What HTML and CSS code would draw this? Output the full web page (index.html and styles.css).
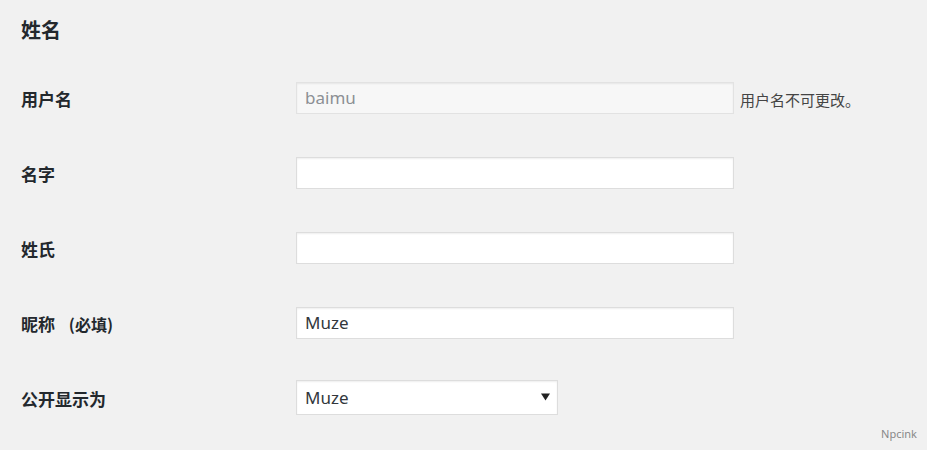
FILE: index.html
```html
<!DOCTYPE html>
<html lang="zh-CN">
<head>
<meta charset="utf-8">
<title>姓名</title>
<link rel="stylesheet" href="styles.css">
</head>
<body>
<main class="page">
  <h2 class="section-title">姓名</h2>
  <div class="form-table">
    <div class="row">
      <label class="label" for="user_login">用户名</label>
      <div class="field">
        <input class="text-input" id="user_login" type="text" value="baimu" disabled>
        <span class="description">用户名不可更改。</span>
      </div>
    </div>
    <div class="row">
      <label class="label" for="first_name">名字</label>
      <div class="field"><input class="text-input" id="first_name" type="text" value=""></div>
    </div>
    <div class="row">
      <label class="label" for="last_name">姓氏</label>
      <div class="field"><input class="text-input" id="last_name" type="text" value=""></div>
    </div>
    <div class="row">
      <label class="label" for="nickname">昵称 <span class="required">(必填)</span></label>
      <div class="field"><input class="text-input" id="nickname" type="text" value="Muze"></div>
    </div>
    <div class="row">
      <label class="label" for="display_name">公开显示为</label>
      <div class="field">
        <div class="select-wrap">
          <select class="select" id="display_name">
            <option>Muze</option>
            <option>baimu</option>
          </select>
          <svg class="select-arrow" width="9" height="8" viewBox="0 0 9 8" aria-hidden="true"><path d="M0 0.5 L9 0.5 L4.5 7.5 Z" fill="#222"/></svg>
        </div>
      </div>
    </div>
  </div>
  <div class="watermark">Npcink</div>
</main>
</body>
</html>
```

FILE: styles.css
```css
html, body {
  margin: 0;
  padding: 0;
  background: #f1f1f1;
}
body {
  font-family: "Noto Sans", "Noto Sans CJK SC", sans-serif;
  color: #23282d;
}
.page {
  position: relative;
  height: 450px;
  padding: 0 21px;
  box-sizing: border-box;
}
.section-title {
  margin: 0;
  padding-top: 16px;
  font-size: 20px;
  line-height: 28px;
  font-weight: 700;
  font-family: "Noto Sans CJK SC", sans-serif;
  color: #23282d;
}
.form-table {
  margin-top: 16px;
}
.row {
  display: grid;
  grid-template-columns: 275px 1fr;
  align-items: center;
  height: 75px;
}
.label {
  font-family: "Noto Sans CJK SC", sans-serif;
  font-weight: 700;
  font-size: 17px;
  line-height: 24px;
  color: #23282d;
  padding-top: 3px;
}
.required {
  font-size: 16px;
  font-weight: 600;
  margin-left: 10px;
}
.field {
  display: flex;
  align-items: center;
  gap: 6px;
}
.text-input {
  width: 438px;
  height: 32px;
  box-sizing: border-box;
  border: 1px solid #ddd;
  background: #fff;
  box-shadow: inset 0 1px 2px rgba(0,0,0,.07);
  padding: 0 8px;
  margin: 0;
  font-family: "Noto Sans", "Noto Sans CJK SC", sans-serif;
  font-size: 17px;
  color: #32373c;
  outline: none;
}
.text-input:disabled {
  background: #f7f7f7;
  color: #8c8f94;
  border-color: #e2e2e2;
}
.description {
  font-family: "Noto Sans CJK SC", sans-serif;
  font-size: 15px;
  color: #444;
  padding-top: 4px;
}
.select-wrap {
  position: relative;
  width: 262px;
  height: 35px;
}
.select {
  appearance: none;
  -webkit-appearance: none;
  width: 262px;
  height: 35px;
  box-sizing: border-box;
  border: 1px solid #ddd;
  background: #fff;
  box-shadow: inset 0 1px 2px rgba(0,0,0,.07);
  padding: 0 8px;
  margin: 0;
  font-family: "Noto Sans", "Noto Sans CJK SC", sans-serif;
  font-size: 17px;
  color: #32373c;
  border-radius: 0;
  outline: none;
}
.select-arrow {
  position: absolute;
  right: 8px;
  top: 13px;
  pointer-events: none;
}
.watermark {
  position: absolute;
  right: 10px;
  bottom: 9px;
  font-family: "Noto Sans", sans-serif;
  font-size: 11px;
  color: #888;
}
```
